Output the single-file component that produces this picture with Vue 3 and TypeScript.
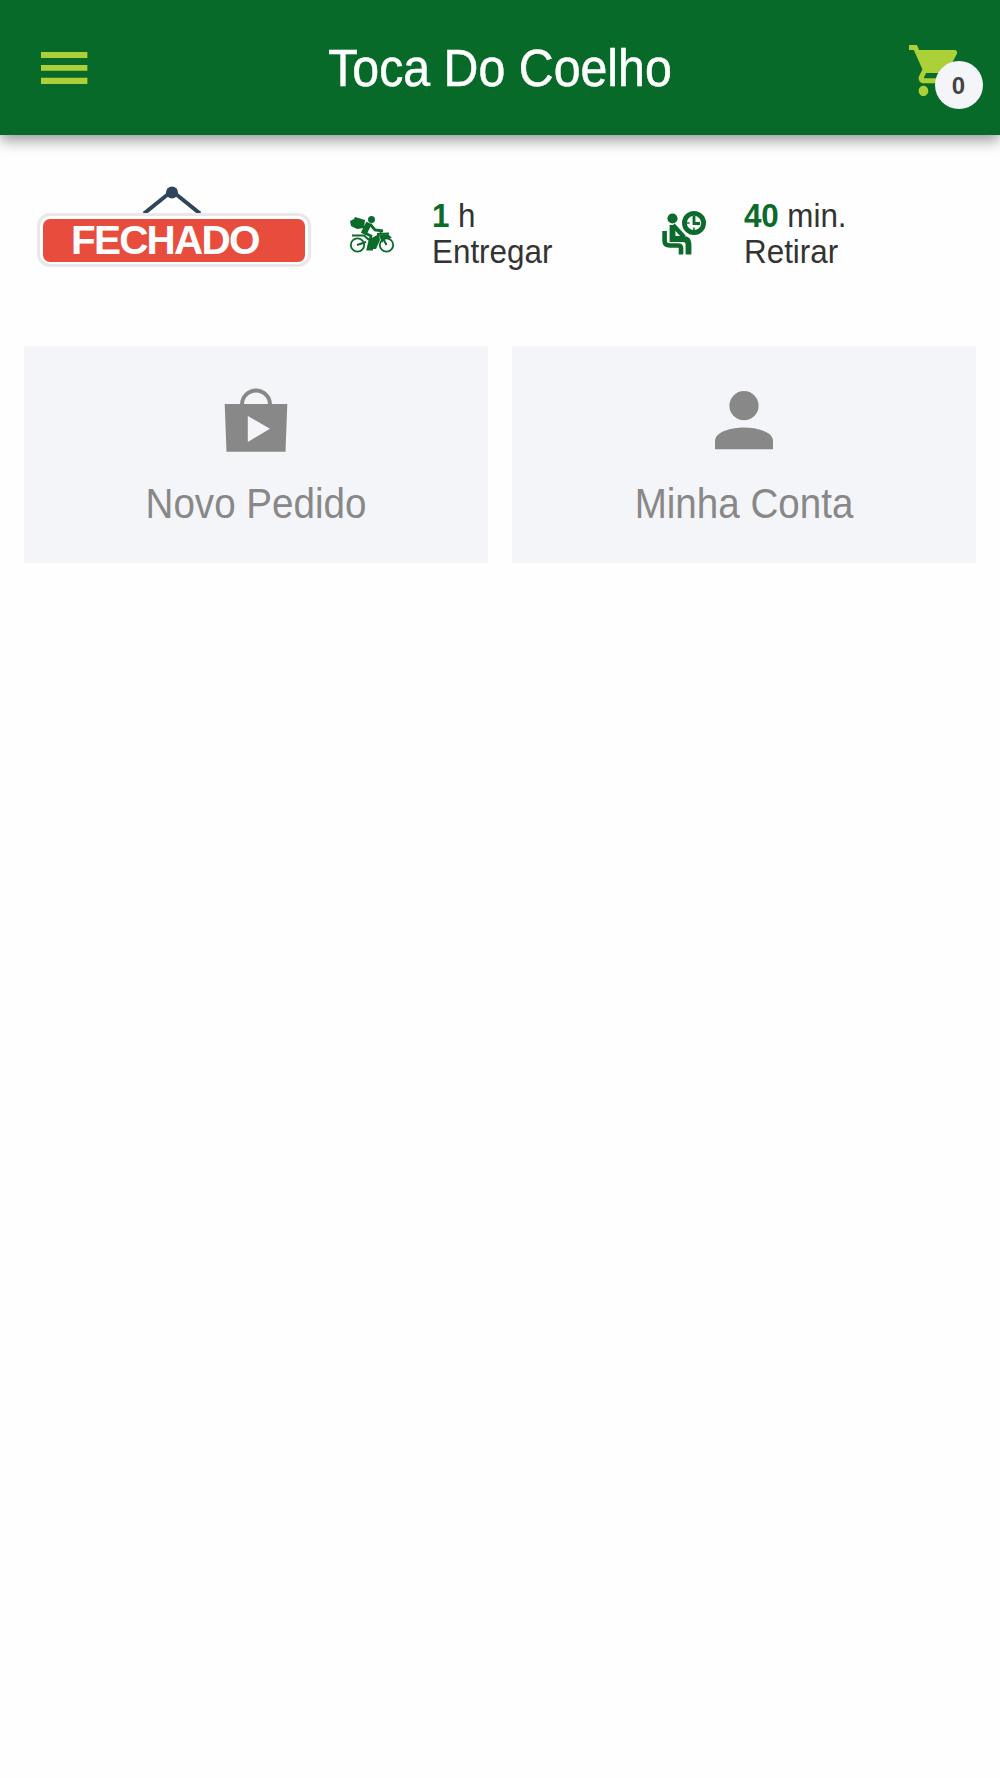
<script setup lang="ts">
interface Estimate {
  kind: 'delivery' | 'pickup'
  amount: string
  unit: string
  label: string
}

const storeName: string = 'Toca Do Coelho'
const cartCount: number = 0
const estimates: Estimate[] = [
  { kind: 'delivery', amount: '1', unit: 'h', label: 'Entregar' },
  { kind: 'pickup', amount: '40', unit: 'min.', label: 'Retirar' },
]
</script>

<template>
  <div class="page">
    <header class="bar">
      <button class="menu" aria-label="Menu">
        <svg viewBox="0 0 47 36" width="47" height="36">
          <path d="M0 1.9H46.4V8.1H0ZM0 15.1H46.4V20.7H0ZM0 27.7H46.4V34.1H0Z" fill="#abd038" />
        </svg>
      </button>
      <h1 class="title">{{ storeName }}</h1>
      <button class="cart" aria-label="Carrinho">
        <svg viewBox="1 2 22 20" width="53" height="51" preserveAspectRatio="none">
          <path
            fill="#abd038"
            d="M7 18c-1.1 0-1.99.9-1.99 2S5.9 22 7 22s2-.9 2-2-.9-2-2-2zM1 2v2h2l3.6 7.59-1.35 2.45c-.16.28-.25.61-.25.96 0 1.1.9 2 2 2h12v-2H7.42c-.14 0-.25-.11-.25-.25l.03-.12.9-1.63h7.45c.75 0 1.41-.41 1.75-1.03l3.58-6.49c.08-.14.12-.31.12-.48 0-.55-.45-1-1-1H5.21l-.94-2H1zm16 16c-1.1 0-1.99.9-1.99 2s.89 2 1.99 2 2-.9 2-2-.9-2-2-2z"
          />
        </svg>
        <span class="badge">{{ cartCount }}</span>
      </button>
    </header>

    <section class="status">
      <div class="sign">
        <svg class="rope" viewBox="0 0 62 28" width="62" height="28">
          <path d="M3 28.5 31 6 59 28.5" fill="none" stroke="#2f455c" stroke-width="4" />
          <circle cx="31" cy="7.5" r="6" fill="#2f455c" />
        </svg>
        <div class="board"><span>FECHADO</span></div>
      </div>

      <div v-for="e in estimates" :key="e.kind" class="estimate" :class="e.kind">
        <svg v-if="e.kind === 'delivery'" class="icon" viewBox="0 0 48 42" width="48" height="42">
          <g fill="none" stroke="#0b6b2b">
            <circle cx="8.5" cy="30" r="6.7" stroke-width="1.8" />
            <circle cx="37.5" cy="30" r="6.7" stroke-width="1.8" />
            <path d="M3 20.5H15L20 25M8 30 17 27M37.5 30 31 17.5M28 19 40 18.5" stroke-width="2" />
            <path d="M21 9 26 15 34 16" stroke-width="2.8" />
            <path d="M20 8 14.5 19" stroke-width="6" />
            <path d="M16 18 22 21 19 34H24" stroke-width="2.8" />
          </g>
          <g fill="#0b6b2b">
            <circle cx="22.5" cy="4.5" r="3.5" />
            <path d="M1 6 5 4 6 2 16 5 15 13 8 14 2 11Z" />
            <path d="M21 24 30 19 31 25 27 34H21Z" />
            <path d="M30 20 39 19 43 23 36 24 33 28Z" />
          </g>
        </svg>
        <svg v-else class="icon" viewBox="0 0 48 48" width="48" height="48">
          <g fill="none" stroke="#0b6b2b">
            <circle cx="33" cy="15" r="9.6" stroke-width="4.8" />
            <path d="M33 8V15.5H39" stroke-width="2.8" />
            <path d="M33 23V19.5M26 15H28.5" stroke-width="1.6" />
            <path d="M3.6 23V33Q3.6 37.5 9 37.5H17Q20 37.5 20 40V46.5" stroke-width="4.6" />
            <path d="M11.5 17V31H22Q27.5 31 27.5 36V46.5" stroke-width="5.8" />
            <path d="M12 17 23 29" stroke-width="4.4" />
          </g>
          <circle cx="11.5" cy="10.5" r="5.1" fill="#0b6b2b" />
        </svg>
        <div class="times">
          <div class="amount"><b>{{ e.amount }}</b> {{ e.unit }}</div>
          <div class="label">{{ e.label }}</div>
        </div>
      </div>
    </section>

    <main class="cards">
      <a class="card order">
        <svg viewBox="0 0 64 66" width="64" height="66">
          <path
            fill="#888"
            fill-rule="evenodd"
            d="M.7 16H63.3L61.5 63.7H2.5ZM23.8 28V54L46 40.8Z"
          />
          <path d="M18 17.5V16.5A14 14 0 0 1 46 16.5V17.5" fill="none" stroke="#888" stroke-width="4" />
        </svg>
        <span>Novo Pedido</span>
      </a>
      <a class="card account">
        <svg viewBox="0 0 64 66" width="64" height="66">
          <circle cx="32" cy="17.7" r="14.6" fill="#888" />
          <path d="M3 61.2V53C3 43.5 20 39.5 32 39.5S61 43.5 61 53V61.2Z" fill="#888" />
        </svg>
        <span>Minha Conta</span>
      </a>
    </main>
  </div>
</template>

<style>
body {
  background: #fefefe;
}
</style>

<style scoped>
.page {
  width: 1000px;
  min-height: 1778px;
  font-family: 'Liberation Sans', Arial, sans-serif;
  color: #333;
}
.bar {
  height: 135px;
  box-sizing: border-box;
  padding: 0 38px 0 41px;
  display: grid;
  grid-template-columns: 53px 1fr 53px;
  align-items: center;
  background: #086a29;
  box-shadow: 0 5px 14px rgba(0, 0, 0, 0.42);
}
button {
  border: 0;
  padding: 0;
  background: none;
  display: flex;
}
.title {
  margin: 0 3px 0 0;
  text-align: center;
  font-size: 48.3px;
  font-weight: 400;
  line-height: 60px;
  letter-spacing: 0;
  color: #fff;
  -webkit-text-stroke: 0.5px #fff;
  transform: scaleY(1.06);
}
.cart {
  position: relative;
  margin-top: 5px;
}
.badge {
  position: absolute;
  left: 25.5px;
  top: 16px;
  width: 48px;
  height: 48px;
  border-radius: 50%;
  background: #f4f5f9;
  color: #444;
  font-size: 24px;
  font-weight: 700;
  line-height: 50px;
  text-align: center;
}
.status {
  height: 210.5px;
  box-sizing: border-box;
  padding: 50px 0 0 37px;
  display: flex;
  align-items: flex-start;
}
.sign {
  width: 274px;
  display: flex;
  flex-direction: column;
}
.rope {
  display: block;
  margin-left: 104px;
}
.board {
  height: 54px;
  box-sizing: border-box;
  border: 3px solid #e8e8e8;
  border-radius: 13px;
  padding: 3px;
  background: #fff;
}
.board span {
  display: block;
  height: 43px;
  border-radius: 7px;
  padding-left: 28px;
  background: #e84c3d;
  color: #fff;
  font-size: 40.5px;
  font-weight: 700;
  line-height: 42px;
  letter-spacing: -1.8px;
}
.estimate {
  display: flex;
  align-items: flex-start;
  padding-top: 13px;
}
.delivery {
  width: 312px;
  margin-left: 38px;
}
.icon {
  flex: none;
}
.delivery .icon {
  margin-top: 17px;
}
.pickup .icon {
  margin-top: 10px;
}
.times {
  font-size: 31.4px;
  line-height: 36px;
  letter-spacing: 0;
  margin-left: 35px;
  white-space: nowrap;
}
.amount,
.label {
  transform: scaleY(1.07);
}
b {
  color: #0b6b2b;
  letter-spacing: -0.2px;
}
.cards {
  padding: 0 24px;
  display: grid;
  grid-template-columns: 1fr 1fr;
  gap: 24px;
}
.card {
  height: 217.5px;
  box-sizing: border-box;
  padding-top: 42px;
  display: flex;
  flex-direction: column;
  align-items: center;
  background: #f4f5f9;
  color: #888;
  font-size: 38.6px;
  line-height: 48px;
  letter-spacing: 0;
}
.card span {
  margin-top: 26px;
  transform: scaleY(1.08);
}
</style>
